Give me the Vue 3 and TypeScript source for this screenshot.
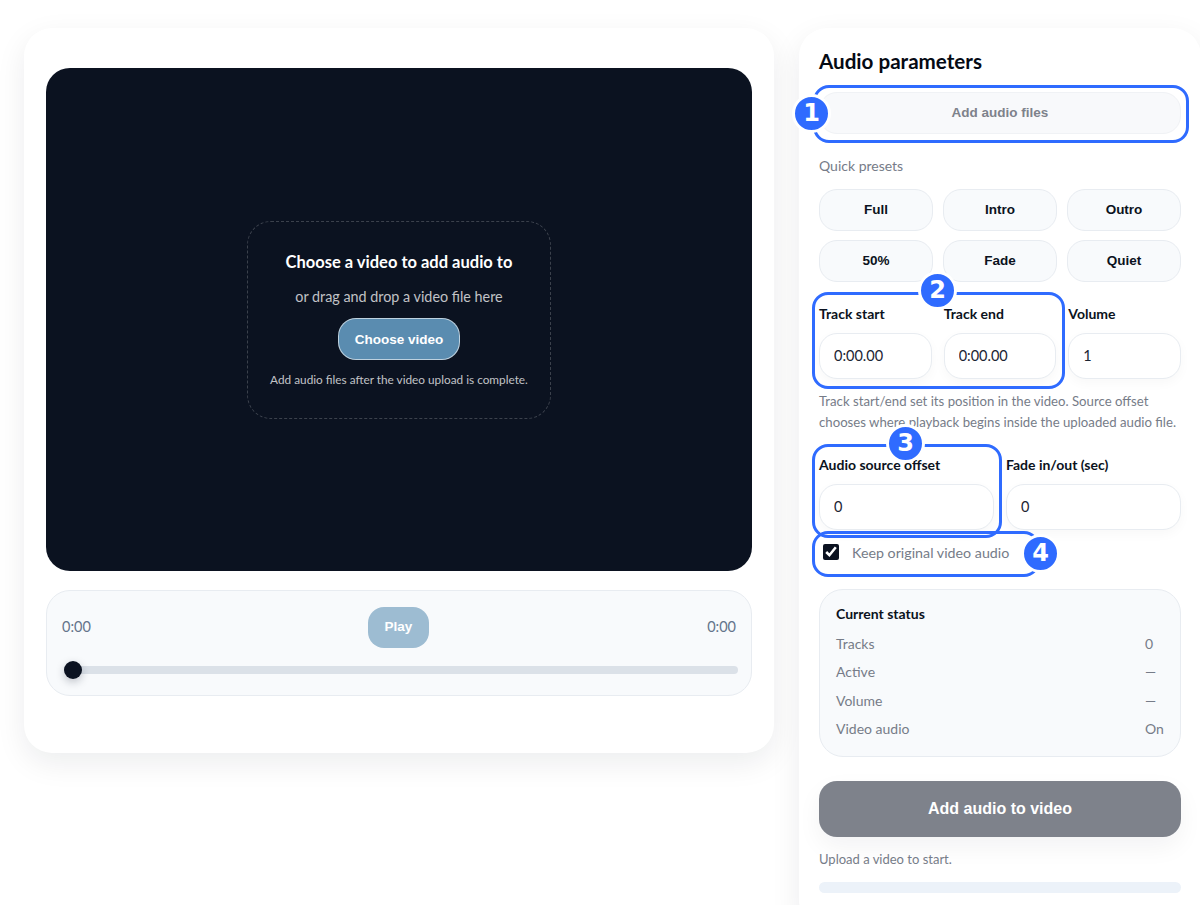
<script setup lang="ts">
const presets: string[] = ['Full', 'Intro', 'Outro', '50%', 'Fade', 'Quiet']
const statusRows: [string, string][] = [
  ['Tracks', '0'],
  ['Active', '—'],
  ['Volume', '—'],
  ['Video audio', 'On'],
]
</script>

<template>
  <div class="page">
    <section class="card stage">
      <div class="video">
        <div class="drop">
          <div class="drop-title">Choose a video to add audio to</div>
          <div class="drop-sub">or drag and drop a video file here</div>
          <button class="choose">Choose video</button>
          <div class="drop-note">Add audio files after the video upload is complete.</div>
        </div>
      </div>
      <div class="controls">
        <div class="controls-top">
          <span class="time">0:00</span>
          <button class="play">Play</button>
          <span class="time">0:00</span>
        </div>
        <div class="track"><span class="thumb"></span></div>
      </div>
    </section>

    <aside class="card panel">
      <h2 class="title">Audio parameters</h2>
      <button class="add-files">Add audio files</button>
      <div class="muted presets-label">Quick presets</div>
      <div class="presets">
        <button v-for="p in presets" :key="p" class="preset">{{ p }}</button>
      </div>
      <div class="fields three">
        <label class="field"><span>Track start</span><input value="0:00.00" /></label>
        <label class="field"><span>Track end</span><input value="0:00.00" /></label>
        <label class="field"><span>Volume</span><input value="1" /></label>
      </div>
      <p class="help">Track start/end set its position in the video. Source offset chooses where playback begins inside the uploaded audio file.</p>
      <div class="fields two">
        <label class="field"><span>Audio source offset</span><input value="0" /></label>
        <label class="field"><span>Fade in/out (sec)</span><input value="0" /></label>
      </div>
      <label class="keep"><input type="checkbox" checked /><span>Keep original video audio</span></label>
      <div class="status">
        <div class="status-title">Current status</div>
        <div v-for="r in statusRows" :key="r[0]" class="status-row">
          <span>{{ r[0] }}</span><span class="status-val">{{ r[1] }}</span>
        </div>
      </div>
      <button class="submit">Add audio to video</button>
      <div class="upload-note">Upload a video to start.</div>
      <div class="progress"></div>
    </aside>

    <div class="mark m1"></div>
    <div class="mark m2"></div>
    <div class="mark m3"></div>
    <div class="mark m4"></div>
    <div class="badge b1">1</div>
    <div class="badge b2">2</div>
    <div class="badge b3">3</div>
    <div class="badge b4">4</div>
  </div>
</template>

<style>
html, body { margin: 0; background: #fff; overflow: hidden; }
</style>

<style scoped>
.page {
  position: relative;
  box-sizing: border-box;
  width: 1200px;
  height: 905px;
  overflow: hidden;
  padding: 28px 0 0 24px;
  display: flex;
  align-items: flex-start;
  gap: 25px;
  background: #fff;
  font-family: "Lato", "Liberation Sans", sans-serif;
  color: #0b1220;
}
.card {
  background: #fff;
  border-radius: 28px;
  box-shadow: 0 10px 30px rgba(15, 23, 42, 0.08);
  box-sizing: border-box;
}
.stage {
  flex: none;
  width: 750px;
  height: 725px;
  padding: 40px 22px 0;
}
.video {
  height: 503px;
  background: #0b1220;
  border-radius: 24px;
  display: flex;
  align-items: center;
  justify-content: center;
}
.drop {
  box-sizing: border-box;
  width: 304px;
  height: 198px;
  margin-top: 1px;
  border: 1px dashed rgba(255, 255, 255, 0.2);
  border-radius: 24px;
  display: flex;
  flex-direction: column;
  align-items: center;
  color: #fff;
}
.drop-title { margin-top: 30px; font-size: 16.5px; font-weight: 700; line-height: 20px; }
.drop-sub { margin-top: 15px; font-size: 14.35px; line-height: 20px; color: rgba(255,255,255,0.75); }
.choose {
  margin-top: 11px;
  width: 122px;
  height: 42px;
  border-radius: 18px;
  border: 1px solid rgba(255,255,255,0.6);
  background: #5a8cb0;
  color: #fff;
  font: 700 13.5px "Liberation Sans", sans-serif;
}
.drop-note { margin-top: 12px; font-size: 11.8px; line-height: 16px; color: rgba(255,255,255,0.75); }
.controls {
  box-sizing: border-box;
  margin-top: 19px;
  height: 106px;
  background: #f8fafc;
  border: 1px solid #e8ecf1;
  border-radius: 24px;
  padding: 16px 15px 0;
}
.controls-top { display: flex; align-items: center; justify-content: space-between; height: 41px; }
.time { font-size: 14.5px; line-height: 40px; height: 41px; color: #64748b; }
.play {
  width: 61px;
  height: 41px;
  margin-left: -1px;
  padding: 0 0 2px;
  border: none;
  border-radius: 16px;
  background: #9dbcd2;
  color: #fff;
  font: 700 13.5px "Liberation Sans", sans-serif;
}
.track {
  position: relative;
  margin: 18px 0 0 2px;
  width: 674px;
  height: 8px;
  border-radius: 4px;
  background: #dbe1e8;
}
.thumb {
  position: absolute;
  left: 0;
  top: -5px;
  width: 18px;
  height: 18px;
  border-radius: 50%;
  background: #0b1220;
  box-shadow: 0 3px 8px rgba(15, 23, 42, 0.25);
}
.panel {
  flex: none;
  width: 402px;
  height: 900px;
  padding: 20px 20px 0;
}
.title { margin: 0; font-size: 20.6px; font-weight: 700; line-height: 26px; color: #050a14; }
.add-files {
  display: block;
  margin-top: 18px;
  width: 362px;
  height: 42px;
  padding: 0 0 2px;
  border: 1px solid #f0f2f5;
  border-radius: 18px;
  background: #f8f9fb;
  color: #7e828b;
  font: 700 13.5px "Liberation Sans", sans-serif;
}
.muted { color: #767c88; font-size: 14px; }
.presets-label { margin-top: 24px; line-height: 16px; font-weight: 400; }
.presets {
  margin-top: 15px;
  display: grid;
  grid-template-columns: repeat(3, 114px);
  grid-auto-rows: 42px;
  column-gap: 10px;
  row-gap: 9px;
}
.preset {
  padding: 0 0 2px;
  border: 1px solid #e8ecf1;
  border-radius: 18px;
  background: #f8fafc;
  color: #0b1220;
  font: 700 13.5px "Liberation Sans", sans-serif;
}
.fields { display: grid; column-gap: 12px; }
.three { margin-top: 23px; grid-template-columns: repeat(3, 1fr); }
.two { margin-top: 23px; grid-template-columns: 1fr 1fr; }
.field { display: flex; flex-direction: column; min-width: 0; }
.field span { font-size: 14px; font-weight: 700; line-height: 18px; color: #0b1220; }
.field input {
  box-sizing: border-box;
  margin-top: 10px;
  width: 100%;
  height: 46px;
  padding: 0 14px 2px;
  border: 1px solid #e8ecf1;
  border-radius: 18px;
  background: #fff;
  box-shadow: 0 4px 12px rgba(15, 23, 42, 0.03);
  font: 400 14.5px "Lato", sans-serif;
  color: #1c2533;
  outline: none;
}
.help { margin: 12px 0 0; font-size: 13.2px; line-height: 21px; color: #767c88; }
.keep { display: flex; align-items: center; height: 20px; margin-top: 12px; padding-left: 4px; font-size: 14.25px; color: #767c88; }
.keep input { width: 16px; height: 16px; margin: 0 13px 0 0; accent-color: #0b1220; }
.status {
  box-sizing: border-box;
  margin-top: 27px;
  height: 168px;
  padding: 14px 16px 0;
  background: #f8fafc;
  border: 1px solid #e8ecf1;
  border-radius: 24px;
}
.status-title { font-size: 14px; font-weight: 700; line-height: 20px; color: #0b1220; }
.status-row {
  display: grid;
  grid-template-columns: 1fr 19px;
  height: 28.5px;
  align-items: center;
  font-size: 14px;
  color: #767c88;
}
.status-title + .status-row { margin-top: 5px; }
.status-val { white-space: nowrap; }
.submit {
  display: block;
  margin-top: 24px;
  width: 362px;
  height: 56px;
  border: none;
  border-radius: 18px;
  background: #7e828b;
  color: #fff;
  box-shadow: 0 10px 24px rgba(15, 23, 42, 0.05);
  font: 700 16px "Liberation Sans", sans-serif;
}
.upload-note { margin-top: 14px; font-size: 13px; line-height: 16px; color: #767c88; }
.progress { margin-top: 15px; width: 362px; height: 11px; border-radius: 6px; background: #ecf2f9; }
.mark {
  position: absolute;
  box-sizing: border-box;
  border: 3px solid #2f6bff;
  border-radius: 16px;
  pointer-events: none;
}
.m1 { left: 813px; top: 85px; width: 376px; height: 58px; }
.m2 { left: 812px; top: 292px; width: 253px; height: 97px; }
.m3 { left: 812px; top: 444px; width: 190px; height: 94px; }
.m4 { left: 812px; top: 531px; width: 228px; height: 46px; }
.badge {
  position: absolute;
  box-sizing: border-box;
  width: 39px;
  height: 39px;
  border: 3px solid #fff;
  border-radius: 50%;
  background: #2f6bff;
  color: #fff;
  font: 700 24px/33px "DejaVu Sans", sans-serif;
  text-align: center;
}
.b1 { left: 792px; top: 94px; }
.b2 { left: 918px; top: 271px; }
.b3 { left: 886px; top: 424px; }
.b4 { left: 1021px; top: 534px; }
</style>
